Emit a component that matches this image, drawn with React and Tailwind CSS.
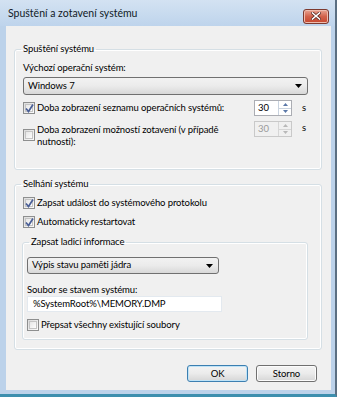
import React from 'react';

const font = { fontFamily: 'Lato, "Noto Sans", sans-serif' };

const CheckBox = ({ checked }) => (
  <span className="flex h-[12px] w-[12px] shrink-0 items-center justify-center border border-[#8e8f8f] bg-gradient-to-br from-[#dcdcdc] to-[#fbfbfb]">
    <span className="flex h-[8px] w-[8px] items-center justify-center border border-[#c4c4c4] bg-gradient-to-br from-[#e6e6e6] to-[#fdfdfd]">
      {checked && (
        <svg width="9" height="9" viewBox="0 0 9 9" className="overflow-visible">
          <path d="M1 4.5 L3.5 7.5 L8 0.5" fill="none" stroke="#4a5f97" strokeWidth="1.7" />
        </svg>
      )}
    </span>
  </span>
);

const Combo = ({ value, className }) => (
  <div className={`flex items-center justify-between rounded-[3px] border border-[#707070] bg-gradient-to-b from-[#f2f2f2] via-[#ebebeb] to-[#d8d8d8] pl-[4px] pr-[5px] ${className}`}>
    <span>{value}</span>
    <svg width="7" height="4" viewBox="0 0 7 4">
      <path d="M0 0 H7 L3.5 4 Z" fill="#000" />
    </svg>
  </div>
);

const Spin = ({ value, disabled }) => (
  <div className={`flex h-[16px] w-[38px] shrink-0 border ${disabled ? 'border-[#c9c9c9] bg-[#f0f0f0] text-[#9a9a9a]' : 'border-[#abadb3] bg-white'}`}>
    <span className="flex flex-1 items-center pl-[3px] leading-[14px]">{value}</span>
    <div className={`flex w-[13px] flex-col border-l ${disabled ? 'border-[#d6d6d6]' : 'border-[#c9d3df]'}`}>
      <div className={`flex flex-1 items-center justify-center border-b ${disabled ? 'border-[#d6d6d6]' : 'border-[#c9d3df]'}`}>
        <svg width="5" height="3" viewBox="0 0 5 3"><path d="M0 3 L2.5 0 L5 3 Z" fill={disabled ? '#b8b8b8' : '#5b78a8'} /></svg>
      </div>
      <div className="flex flex-1 items-center justify-center">
        <svg width="5" height="3" viewBox="0 0 5 3"><path d="M0 0 L2.5 3 L5 0 Z" fill={disabled ? '#b8b8b8' : '#5b78a8'} /></svg>
      </div>
    </div>
  </div>
);

const Button = ({ children, primary }) => (
  <button
    className={`flex h-[17px] w-[61px] items-center justify-center rounded-[3px] border bg-gradient-to-b from-[#f4f4f4] via-[#ebebeb] to-[#d6d6d6] leading-[14px] ${
      primary ? 'border-[#3c7fb1] shadow-[inset_0_0_0_1px_#bfe3f7]' : 'border-[#707070] shadow-[inset_0_0_0_1px_#fcfcfc]'
    }`}
  >
    {children}
  </button>
);

export default function App() {
  return (
    <div className="h-[400px] w-[340px] overflow-hidden whitespace-nowrap bg-white text-[9.5px] tracking-[-0.1px] text-black" style={font}>
      <div className="flex h-[397px] w-[337px] flex-col border-b-[3px] border-r-[2px] border-b-[#3d8fae] border-r-[#5b6f82] bg-[#bcd2ea]">
        {/* title bar */}
        <div className="flex h-[26px] shrink-0 items-center justify-between bg-gradient-to-b from-[#d3e2f2] to-[#bed4ec] pl-[8px] pr-[6px]">
          <span className="text-[10.5px] leading-[14px] tracking-normal text-[#111a26]">Spuštění a zotavení systému</span>
          <div className="mt-[6px] flex h-[15px] w-[26px] items-center justify-center rounded-[3px] border border-[#7d3a2f] bg-gradient-to-b from-[#e8a493] via-[#d2624b] to-[#c6452c] shadow-[inset_0_0_0_1px_#eebcae]">
            <svg width="10" height="8" viewBox="0 0 10 8">
              <path d="M1.5 1 L8.5 7 M8.5 1 L1.5 7" stroke="#5a2a24" strokeWidth="3" strokeLinecap="square" />
              <path d="M1.5 1 L8.5 7 M8.5 1 L1.5 7" stroke="#ffffff" strokeWidth="1.6" strokeLinecap="square" />
            </svg>
          </div>
        </div>

        {/* client area */}
        <div className="ml-[6px] flex h-[364px] w-[325px] shrink-0 flex-col bg-[#f0f0f0] pt-[16px]">
          <fieldset className="ml-[8px] w-[308px] rounded-[3px] border border-[#d5dfe5] pb-[21px] pl-[8px] pr-[13px] shadow-[inset_0_0_0_1px_#fff]">
            <legend className="-ml-[2px] px-[2px] leading-[14px]">Spuštění systému</legend>
            <div className="mt-[5px] leading-[14px]">Výchozí operační systém:</div>
            <Combo value="Windows 7" className="mt-[2px] h-[18px]" />
            <div className="mt-[5px] flex items-center">
              <CheckBox checked />
              <span className="ml-[2px] flex-1 leading-[14px]">Doba zobrazení seznamu operačních systémů:</span>
              <Spin value="30" />
              <span className="w-[16px] pl-[10px] leading-[14px]">s</span>
            </div>
            <div className="mt-[5px] flex items-start">
              <div className="mt-[8px]"><CheckBox /></div>
              <span className="ml-[2px] mt-[3px] flex-1 leading-[12px]">
                Doba zobrazení možností zotavení (v případě
                <br />
                nutnosti):
              </span>
              <Spin value="30" disabled />
              <span className="w-[16px] pl-[10px] leading-[14px]">s</span>
            </div>
          </fieldset>

          <fieldset className="ml-[8px] mt-[7px] w-[308px] rounded-[3px] border border-[#d5dfe5] pb-[9px] pl-[7px] pr-[13px] shadow-[inset_0_0_0_1px_#fff]">
            <legend className="-ml-[1px] px-[2px] leading-[14px]">Selhání systému</legend>
            <div className="ml-[1px] mt-[5px] flex items-center">
              <CheckBox checked />
              <span className="ml-[2px] leading-[14px]">Zapsat událost do systémového protokolu</span>
            </div>
            <div className="ml-[1px] mt-[5px] flex items-center">
              <CheckBox checked />
              <span className="ml-[2px] leading-[14px]">Automaticky restartovat</span>
            </div>
            <fieldset className="mt-[6px] rounded-[3px] border border-[#d5dfe5] pb-[7px] pl-[4px] pr-[8px] shadow-[inset_0_0_0_1px_#fff]">
              <legend className="ml-[2px] px-[2px] leading-[14px]">Zapsat ladicí informace</legend>
              <Combo value="Výpis stavu paměti jádra" className="mt-[8px] h-[17px] w-[192px]" />
              <div className="mt-[10px] leading-[12px]">Soubor se stavem systému:</div>
              <div className="flex h-[16px] w-[195px] items-center border border-[#e3e9ef] bg-white pl-[5px] leading-[14px]">
                %SystemRoot%\MEMORY.DMP
              </div>
              <div className="mt-[6px] flex items-center">
                <CheckBox />
                <span className="ml-[2px] leading-[14px]">Přepsat všechny existující soubory</span>
              </div>
            </fieldset>
          </fieldset>

          <div className="mr-[14px] mt-[15px] flex justify-end gap-[8px]">
            <Button primary>OK</Button>
            <Button>Storno</Button>
          </div>
        </div>
      </div>
    </div>
  );
}
